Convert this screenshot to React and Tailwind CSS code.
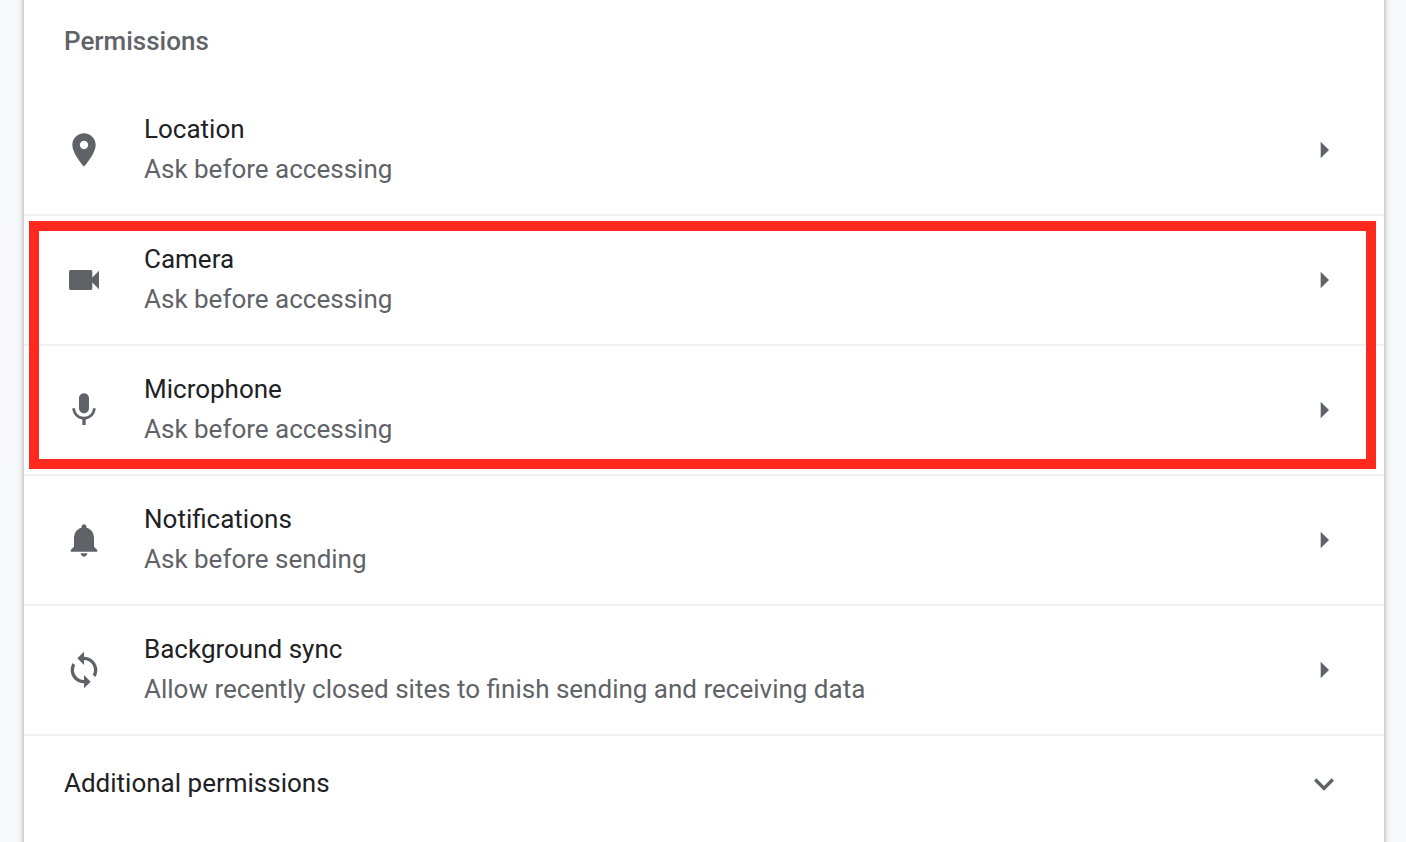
import React, { useState } from 'react';

const icons = {
  location: 'M12 2C8.13 2 5 5.13 5 9c0 5.25 7 13 7 13s7-7.75 7-13c0-3.87-3.13-7-7-7zm0 9.5c-1.38 0-2.5-1.12-2.5-2.5s1.12-2.5 2.5-2.5 2.5 1.12 2.5 2.5-1.12 2.5-2.5 2.5z',
  camera: 'M17 10.5V7c0-.55-.45-1-1-1H4c-.55 0-1 .45-1 1v10c0 .55.45 1 1 1h12c.55 0 1-.45 1-1v-3.5l4 4v-11l-4 4z',
  microphone: 'M12 14c1.66 0 2.99-1.34 2.99-3L15 5c0-1.66-1.34-3-3-3S9 3.34 9 5v6c0 1.66 1.34 3 3 3zm5.3-3c0 3-2.54 5.1-5.3 5.1S6.7 14 6.7 11H5c0 3.41 2.72 6.23 6 6.72V21h2v-3.28c3.28-.48 6-3.3 6-6.72h-1.7z',
  notifications: 'M12 22c1.1 0 2-.9 2-2h-4c0 1.1.89 2 2 2zm6-6v-5c0-3.07-1.64-5.64-4.5-6.32V4c0-.83-.67-1.5-1.5-1.5s-1.5.67-1.5 1.5v.68C7.63 5.36 6 7.92 6 11v5l-2 2v1h16v-1l-2-2z',
  sync: 'M12 4V1L8 5l4 4V6c3.31 0 6 2.69 6 6 0 1.01-.25 1.97-.7 2.8l1.46 1.46C19.54 15.03 20 13.57 20 12c0-4.42-3.58-8-8-8zm0 14c-3.31 0-6-2.69-6-6 0-1.01.25-1.97.7-2.8L5.24 7.74C4.46 8.97 4 10.43 4 12c0 4.42 3.58 8 8 8v3l4-4-4-4v3z',
  arrow: 'M10 7l5 5-5 5z',
  expand: 'M16.59 8.59L12 13.17 7.41 8.59 6 10l6 6 6-6z',
};

const Icon = ({ name, className = '' }) => (
  <svg className={`size-10 shrink-0 text-[#5f6368] ${className}`} viewBox="0 0 24 24" fill="currentColor" aria-hidden="true">
    <path d={icons[name]} />
  </svg>
);

const PermissionRow = ({ icon, title, description, first }) => (
  <button
    type="button"
    className={`flex w-full items-center gap-10 px-10 py-[23px] text-left cursor-pointer ${first ? '' : 'border-t-2 border-[#f0f0f0]'}`}
  >
    <Icon name={icon} />
    <span className="flex-1 pb-[2px] leading-10">
      <span className="block text-[#202124]">{title}</span>
      <span className="block text-[#5f6368]">{description}</span>
    </span>
    <Icon name="arrow" />
  </button>
);

const App = () => {
  const [expanded, setExpanded] = useState(false);

  return (
    <div className="flex min-h-screen overflow-hidden bg-[#f8f9fb] pl-6 pr-[22px] font-[Roboto,sans-serif] text-[26px]">
      {/* the card runs past the top and bottom edges of the window */}
      <main className="-my-4 flex-1 bg-white py-4 shadow-[0_2px_4px_0_rgba(60,64,67,0.3),0_2px_6px_2px_rgba(60,64,67,0.15)]">
        <h2 className="pt-[21px] px-10 pb-[25px] leading-10 font-medium text-[#5f6368]">Permissions</h2>

        <PermissionRow first icon="location" title="Location" description="Ask before accessing" />

        <div className="relative">
          <PermissionRow icon="camera" title="Camera" description="Ask before accessing" />
          <PermissionRow icon="microphone" title="Microphone" description="Ask before accessing" />
          {/* highlight around camera and microphone */}
          <div className="pointer-events-none absolute top-[7px] right-2 bottom-[5px] left-[5px] border-10 border-[#ff2a1d]" />
        </div>

        <PermissionRow icon="notifications" title="Notifications" description="Ask before sending" />
        <PermissionRow
          icon="sync"
          title="Background sync"
          description="Allow recently closed sites to finish sending and receiving data"
        />

        <button
          type="button"
          aria-expanded={expanded}
          onClick={() => setExpanded(!expanded)}
          className="flex w-full items-center justify-between border-t-2 border-[#f0f0f0] px-10 py-[27px] text-left leading-10 text-[#202124] cursor-pointer"
        >
          <span className="pb-[2px]">Additional permissions</span>
          <Icon name="expand" className={expanded ? 'rotate-180' : ''} />
        </button>
      </main>
    </div>
  );
};

export default App;
